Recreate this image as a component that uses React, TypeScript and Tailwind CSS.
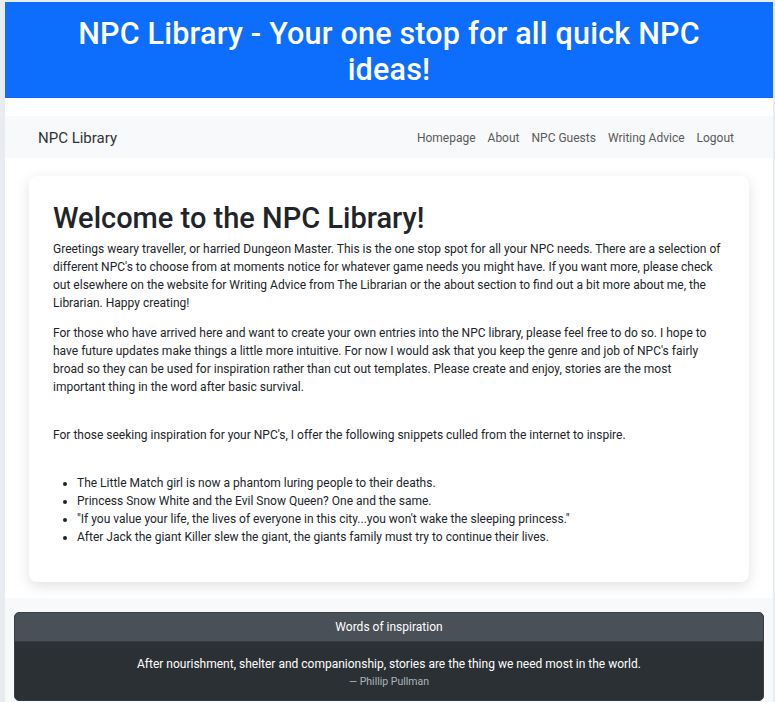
import React from "react";

export default function App() {
  const font = { fontFamily: 'Roboto, "Noto Sans", "Liberation Sans", sans-serif' };
  return (
    <div className="min-h-[702px] bg-[#e8ecf1] pl-[5px] pr-[2px] pt-[2px]" style={font}>
      <div className="min-h-[700px] bg-white text-[#212529]">
        <header className="bg-[#0d6efd] px-6 pb-[10px] pt-[14px] text-center">
          <h1 className="text-[30.5px] font-medium leading-[36px] tracking-[0.2px] text-white">
            NPC Library - Your one stop for all quick NPC
            <br />
            ideas!
          </h1>
        </header>
        <nav className="mt-[18px] flex h-[42px] items-center justify-between bg-[#f8f9fa] pl-[33px] pr-[33px] pt-[2px]">
          <span className="text-[15px] text-[#333]">NPC Library</span>
          <ul className="flex text-[12px] text-[#595959]">
            {["Homepage", "About", "NPC Guests", "Writing Advice", "Logout"].map((l) => (
              <li key={l} className="px-[6px]">
                {l}
              </li>
            ))}
          </ul>
        </nav>
        <main className="px-[24px] pb-[16px] pt-[18px]">
          <div className="rounded-[8px] bg-white p-[24px] shadow-[0_4px_14px_rgba(0,0,0,0.12)]">
            <h1 className="mb-[4px] text-[29px] font-medium leading-[36px]">Welcome to the NPC Library!</h1>
            <div className="text-[12px] leading-[18px] whitespace-nowrap">
              <p className="mb-[12px]">
                Greetings weary traveller, or harried Dungeon Master. This is the one stop spot for all your NPC needs. There are a selection of
                <br />
                different NPC's to choose from at moments notice for whatever game needs you might have. If you want more, please check
                <br />
                out elsewhere on the website for Writing Advice from The Librarian or the about section to find out a bit more about me, the
                <br />
                Librarian. Happy creating!
              </p>
              <p className="mb-[12px]">
                For those who have arrived here and want to create your own entries into the NPC library, please feel free to do so. I hope to
                <br />
                have future updates make things a little more intuitive. For now I would ask that you keep the genre and job of NPC's fairly
                <br />
                broad so they can be used for inspiration rather than cut out templates. Please create and enjoy, stories are the most
                <br />
                important thing in the word after basic survival.
              </p>
              <br />
              <p className="mb-[12px]">
                For those seeking inspiration for your NPC's, I offer the following snippets culled from the internet to inspire.
              </p>
              <br />
              <ul className="mb-[12px] list-disc pl-[24px]">
                <li>The Little Match girl is now a phantom luring people to their deaths.</li>
                <li>Princess Snow White and the Evil Snow Queen? One and the same.</li>
                <li>"If you value your life, the lives of everyone in this city...you won't wake the sleeping princess."</li>
                <li>After Jack the giant Killer slew the giant, the giants family must try to continue their lives.</li>
              </ul>
            </div>
          </div>
        </main>
        <footer className="bg-[#f8f9fa] px-[9px] pb-[2px] pt-[14px]">
          <div className="overflow-hidden rounded-[5px] border border-[#3a3f45] bg-[#2b3035] text-center text-white">
            <div className="flex h-[29px] items-center justify-center border-b border-[#373b40] bg-[#4a5058] text-[12px]">
              Words of inspiration
            </div>
            <div className="pb-[10px] pt-[13px]">
              <p className="text-[12px] leading-[18px]">
                After nourishment, shelter and companionship, stories are the thing we need most in the world.
              </p>
              <p className="mt-[1px] text-[10.5px] leading-[16px] text-[#adb5bd]">— Phillip Pullman</p>
            </div>
          </div>
        </footer>
      </div>
    </div>
  );
}
